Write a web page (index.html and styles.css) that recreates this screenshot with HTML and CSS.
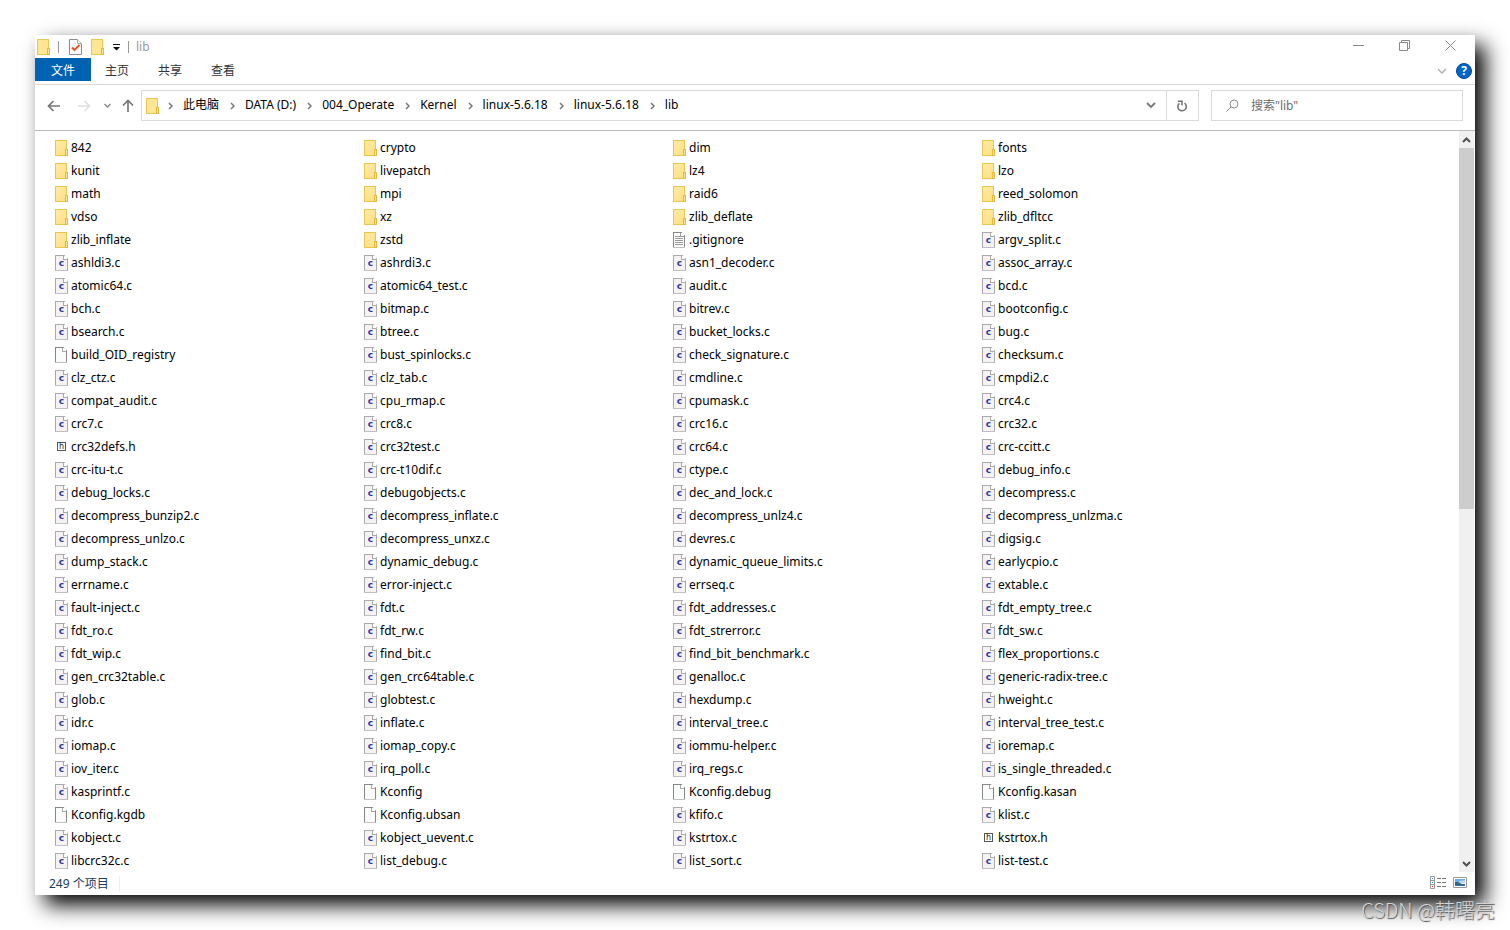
FILE: index.html
```html
<!DOCTYPE html>
<html lang="zh-CN">
<head>
<meta charset="utf-8">
<title>lib</title>
<link rel="stylesheet" href="styles.css">
</head>
<body>
<svg class="defs" width="0" height="0" aria-hidden="true">
  <symbol id="folder" viewBox="0 0 13 16">
    <path fill="#e8c650" d="M0 0h12v9h1v7H0z"/><path fill="#ffe694" d="M1 1h10v14H1z"/>
    <path fill="#e3b93f" d="M10 9h3v7h-3z"/><path fill="#ffe694" d="M11 10h1v5h-1z"/>
  </symbol>
  <symbol id="crumb" viewBox="0 0 5 8"><path d="M1 1l3 3-3 3" fill="none" stroke="#777" stroke-width="1.5"/></symbol>
</svg>
<main class="window">
  <header class="titlebar">
    <svg width="13" height="16"><use href="#folder"/></svg>
    <span class="bar"></span>
    <button class="quick" aria-label="属性"><svg width="13" height="16" viewBox="0 0 13 16"><path d="M.5.5h8l4 4v11H.5z" fill="#fafafa" stroke="#8b8b8b"/><path d="M8.500.5v4h4" fill="#fff" stroke="#aaa"/><path d="M3 8.500l2.500 2.500L10.500 6" fill="none" stroke="#e8501e" stroke-width="1.800"/></svg></button>
    <button class="quick" aria-label="新建文件夹"><svg width="13" height="16"><use href="#folder"/></svg></button>
    <button class="quick" aria-label="自定义快速访问工具栏"><svg width="7" height="9" viewBox="0 0 7 9"><path d="M0 2h7v1H0zM0 5h7L3.500 8.500z" fill="#111"/></svg></button>
    <span class="bar near"></span>
    <span class="title">lib</span>
    <div class="controls">
      <button aria-label="最小化"><svg width="11" height="11" viewBox="0 0 11 11"><path d="M0 5.500h11" stroke="#888"/></svg></button>
      <button aria-label="还原"><svg width="11" height="11" viewBox="0 0 11 11"><path d="M.5 2.500h8v8h-8zM2.500 2.500v-2h8v8h-2" fill="none" stroke="#888"/></svg></button>
      <button aria-label="关闭"><svg width="11" height="11" viewBox="0 0 11 11"><path d="M.5.5l10 10M10.500.5l-10 10" stroke="#888"/></svg></button>
    </div>
  </header>
  <nav class="ribbon">
    <button class="tab file">文件</button>
    <button class="tab">主页</button>
    <button class="tab">共享</button>
    <button class="tab">查看</button>
    <div class="ribbon-end">
      <button aria-label="展开功能区"><svg width="10" height="6" viewBox="0 0 10 6"><path d="M1 1l4 4 4-4" fill="none" stroke="#aaa" stroke-width="1.300"/></svg></button>
      <button class="help" aria-label="帮助">?</button>
    </div>
  </nav>
  <div class="address-row">
    <div class="history">
      <button aria-label="后退"><svg width="13" height="12" viewBox="0 0 13 12"><path d="M13 6H1.500M6.500 1l-5 5 5 5" fill="none" stroke="#777" stroke-width="1.700"/></svg></button>
      <button aria-label="前进"><svg width="13" height="12" viewBox="0 0 13 12"><path d="M0 6h11.500M6.500 1l5 5-5 5" fill="none" stroke="#ddd" stroke-width="1.500"/></svg></button>
      <button aria-label="最近位置"><svg width="7" height="5" viewBox="0 0 7 5"><path d="M.5 1l3 3 3-3" fill="none" stroke="#888" stroke-width="1.500"/></svg></button>
      <button aria-label="向上"><svg width="12" height="13" viewBox="0 0 12 13"><path d="M6 13V1.500M1 6.500l5-5 5 5" fill="none" stroke="#777" stroke-width="1.700"/></svg></button>
    </div>
    <div class="address">
      <svg width="13" height="16"><use href="#folder"/></svg>
      <svg width="5" height="8"><use href="#crumb"/></svg><a href="#">此电脑</a>
      <svg width="5" height="8"><use href="#crumb"/></svg><a href="#">DATA (D:)</a>
      <svg width="5" height="8"><use href="#crumb"/></svg><a href="#">004_Operate</a>
      <svg width="5" height="8"><use href="#crumb"/></svg><a href="#">Kernel</a>
      <svg width="5" height="8"><use href="#crumb"/></svg><a href="#">linux-5.6.18</a>
      <svg width="5" height="8"><use href="#crumb"/></svg><a href="#">linux-5.6.18</a>
      <svg width="5" height="8"><use href="#crumb"/></svg><a href="#">lib</a>
      <button class="drop" aria-label="以前的位置"><svg width="10" height="7" viewBox="0 0 10 7"><path d="M1 1l4 4 4-4" fill="none" stroke="#777" stroke-width="1.800"/></svg></button>
      <button class="refresh" aria-label="刷新"><svg width="11" height="12" viewBox="0 0 11 12"><path d="M7.500 3.200A4.200 4.200 0 1 1 2.500 3.300" fill="none" stroke="#707070" stroke-width="1.500"/><path d="M1 1.200h4v4" fill="none" stroke="#707070" stroke-width="1.500"/></svg></button>
    </div>
    <label class="search">
      <svg width="13" height="13" viewBox="0 0 13 13"><circle cx="8" cy="5" r="4" fill="none" stroke="#888"/><path d="M5 8L.5 12.500" stroke="#888"/></svg>
      <input type="search" aria-label="搜索" placeholder='搜索"lib"'>
    </label>
  </div>
  <div class="content">
    <ul class="files">
      <li class="d">842</li><li class="d">crypto</li><li class="d">dim</li><li class="d">fonts</li>
      <li class="d">kunit</li><li class="d">livepatch</li><li class="d">lz4</li><li class="d">lzo</li>
      <li class="d">math</li><li class="d">mpi</li><li class="d">raid6</li><li class="d">reed_solomon</li>
      <li class="d">vdso</li><li class="d">xz</li><li class="d">zlib_deflate</li><li class="d">zlib_dfltcc</li>
      <li class="d">zlib_inflate</li><li class="d">zstd</li><li class="t">.gitignore</li><li class="c">argv_split.c</li>
      <li class="c">ashldi3.c</li><li class="c">ashrdi3.c</li><li class="c">asn1_decoder.c</li><li class="c">assoc_array.c</li>
      <li class="c">atomic64.c</li><li class="c">atomic64_test.c</li><li class="c">audit.c</li><li class="c">bcd.c</li>
      <li class="c">bch.c</li><li class="c">bitmap.c</li><li class="c">bitrev.c</li><li class="c">bootconfig.c</li>
      <li class="c">bsearch.c</li><li class="c">btree.c</li><li class="c">bucket_locks.c</li><li class="c">bug.c</li>
      <li class="p">build_OID_registry</li><li class="c">bust_spinlocks.c</li><li class="c">check_signature.c</li><li class="c">checksum.c</li>
      <li class="c">clz_ctz.c</li><li class="c">clz_tab.c</li><li class="c">cmdline.c</li><li class="c">cmpdi2.c</li>
      <li class="c">compat_audit.c</li><li class="c">cpu_rmap.c</li><li class="c">cpumask.c</li><li class="c">crc4.c</li>
      <li class="c">crc7.c</li><li class="c">crc8.c</li><li class="c">crc16.c</li><li class="c">crc32.c</li>
      <li class="h">crc32defs.h</li><li class="c">crc32test.c</li><li class="c">crc64.c</li><li class="c">crc-ccitt.c</li>
      <li class="c">crc-itu-t.c</li><li class="c">crc-t10dif.c</li><li class="c">ctype.c</li><li class="c">debug_info.c</li>
      <li class="c">debug_locks.c</li><li class="c">debugobjects.c</li><li class="c">dec_and_lock.c</li><li class="c">decompress.c</li>
      <li class="c">decompress_bunzip2.c</li><li class="c">decompress_inflate.c</li><li class="c">decompress_unlz4.c</li><li class="c">decompress_unlzma.c</li>
      <li class="c">decompress_unlzo.c</li><li class="c">decompress_unxz.c</li><li class="c">devres.c</li><li class="c">digsig.c</li>
      <li class="c">dump_stack.c</li><li class="c">dynamic_debug.c</li><li class="c">dynamic_queue_limits.c</li><li class="c">earlycpio.c</li>
      <li class="c">errname.c</li><li class="c">error-inject.c</li><li class="c">errseq.c</li><li class="c">extable.c</li>
      <li class="c">fault-inject.c</li><li class="c">fdt.c</li><li class="c">fdt_addresses.c</li><li class="c">fdt_empty_tree.c</li>
      <li class="c">fdt_ro.c</li><li class="c">fdt_rw.c</li><li class="c">fdt_strerror.c</li><li class="c">fdt_sw.c</li>
      <li class="c">fdt_wip.c</li><li class="c">find_bit.c</li><li class="c">find_bit_benchmark.c</li><li class="c">flex_proportions.c</li>
      <li class="c">gen_crc32table.c</li><li class="c">gen_crc64table.c</li><li class="c">genalloc.c</li><li class="c">generic-radix-tree.c</li>
      <li class="c">glob.c</li><li class="c">globtest.c</li><li class="c">hexdump.c</li><li class="c">hweight.c</li>
      <li class="c">idr.c</li><li class="c">inflate.c</li><li class="c">interval_tree.c</li><li class="c">interval_tree_test.c</li>
      <li class="c">iomap.c</li><li class="c">iomap_copy.c</li><li class="c">iommu-helper.c</li><li class="c">ioremap.c</li>
      <li class="c">iov_iter.c</li><li class="c">irq_poll.c</li><li class="c">irq_regs.c</li><li class="c">is_single_threaded.c</li>
      <li class="c">kasprintf.c</li><li class="p">Kconfig</li><li class="p">Kconfig.debug</li><li class="p">Kconfig.kasan</li>
      <li class="p">Kconfig.kgdb</li><li class="p">Kconfig.ubsan</li><li class="c">kfifo.c</li><li class="c">klist.c</li>
      <li class="c">kobject.c</li><li class="c">kobject_uevent.c</li><li class="c">kstrtox.c</li><li class="h">kstrtox.h</li>
      <li class="c">libcrc32c.c</li><li class="c">list_debug.c</li><li class="c">list_sort.c</li><li class="c">list-test.c</li>
    </ul>
    <div class="scrollbar">
      <button aria-label="向上滚动"><svg width="9" height="6" viewBox="0 0 9 6"><path d="M1 5l3.500-3.500L8 5" fill="none" stroke="#505050" stroke-width="2"/></svg></button>
      <div class="track"><div class="thumb"></div></div>
      <button aria-label="向下滚动"><svg width="9" height="6" viewBox="0 0 9 6"><path d="M1 1l3.500 3.500L8 1" fill="none" stroke="#505050" stroke-width="2"/></svg></button>
    </div>
  </div>
  <footer class="status">
    <span class="count">249 个项目</span>
    <div class="views">
      <button aria-label="详细信息"><svg width="17" height="13" viewBox="0 0 17 13"><path d="M.5.5h4v12h-4zM.5 4.500h4M.5 8.500h4" fill="#fff" stroke="#999"/><path d="M7 2.500h4m1 0h4M7 6.500h4m1 0h4M7 10.500h4m1 0h4" stroke="#777"/><path d="M2 2h1v1H2zM2 6h1v1H2z" fill="#3b8ee0"/><path d="M2 10h1v1H2z" fill="#d22"/></svg></button>
      <button aria-label="大图标"><svg width="14" height="11" viewBox="0 0 14 11"><path d="M.5.5h13v10H.5z" fill="#fff" stroke="#999"/><path d="M2 2h10v4H2z" fill="#6aa9ea"/><path d="M6 4l6-1v3H6z" fill="#b6d6f2"/><path d="M2 5l3 0 4 2h3v2H2z" fill="#2f6b7c"/><path d="M2 8h10v1H2z" fill="#3b6fb4"/></svg></button>
    </div>
  </footer>
</main>
<div class="watermark">CSDN @韩曙亮</div>
</body>
</html>
```
FILE: styles.css
```css
*, *::before { box-sizing: border-box; }
body {
  margin: 0;
  min-height: 100vh;
  padding: 35px;
  display: flex;
  position: relative;
  overflow: hidden;
  background: #fff;
  color: #000;
  font: 12px/16px "Noto Sans", "Noto Sans CJK SC", sans-serif;
}
.defs { position: absolute; }
svg { display: block; flex: none; }
button {
  border: 0;
  padding: 0;
  background: none;
  font: inherit;
  color: inherit;
  display: flex;
  align-items: center;
  justify-content: center;
}
.window {
  flex: 1;
  min-width: 0;
  display: flex;
  flex-direction: column;
  background: #fff;
  box-shadow: 10px 10px 20px #000;
}
.titlebar { display: flex; align-items: center; height: 23px; padding-left: 2px; }
.bar { width: 1px; height: 12px; margin: 0 10px 0 8px; background: #999; }
.quick { margin-right: 9px; }
.bar.near { margin: 0 7px 0 -1px; }
.title { color: #999; }
.controls { display: flex; margin: 0 2px 0 auto; align-self: stretch; }
.controls button { width: 46px; padding-bottom: 2px; }
.ribbon { display: flex; gap: 1px; height: 27px; padding-bottom: 3px; border-bottom: 1px solid #dadada; }
.tab { padding: 2px 14px 0; color: #333; }
.tab.file { margin-right: -1px; padding: 2px 16px 0; background: #0063b1; color: #fff; }
.ribbon-end { display: flex; align-items: center; gap: 9px; margin-left: auto; padding: 2px 3px 0 0; }
.help { width: 16px; height: 16px; border: 1px solid #00488f; border-radius: 50%; background: #0066cc; color: #fff; font-weight: bold; }
.address-row { display: flex; align-items: center; height: 46px; padding: 0 12px 4px 12px; border-bottom: 1px solid #bbb; }
.history { display: flex; align-items: center; width: 94px; gap: 13px; }
.history button:first-child { margin-right: 5px; }
.history button:last-child { margin-left: -2px; }
.address { flex: 1; display: flex; align-items: center; height: 31px; padding-left: 4px; border: 1px solid #d9d9d9; }
.address a { color: #000; text-decoration: none; padding: 0 11px 2px 10px; }
.address > svg:first-child { margin-right: 9px; }
.drop { width: 30px; height: 29px; margin-left: auto; }
.refresh { width: 32px; height: 29px; border-left: 1px solid #d9d9d9; }
.search { display: flex; align-items: center; gap: 12px; width: 252px; height: 31px; margin-left: 12px; padding-left: 14px; border: 1px solid #d9d9d9; }
.search input { flex: 1; min-width: 0; border: 0; padding: 0; outline: 0; background: none; font: inherit; }
.search input::placeholder { color: #6d6d6d; opacity: 1; }
.content { flex: 1; display: flex; }
.files {
  flex: 1;
  display: grid;
  grid-template-columns: repeat(auto-fill, 309px);
  grid-auto-rows: 23px;
  margin: 0;
  padding: 5px 0 0 20px;
  list-style: none;
}
.files li { display: flex; align-items: center; }
.files li::before {
  content: "";
  flex: none;
  width: 13px;
  height: 16px;
  margin-right: 3px;
  background-repeat: no-repeat;
}
.files .d::before {
  background-image:
    linear-gradient(#ffe694, #ffe694),
    linear-gradient(#e3b93f, #e3b93f),
    linear-gradient(135deg, #ffeba6, #fddf84),
    linear-gradient(#e8c650, #e8c650);
  background-position: 11px 10px, 10px 9px, 1px 1px, 0 0;
  background-size: 1px 5px, 3px 7px, 10px 14px, 12px 16px;
}
.files .c::before, .files .p::before, .files .t::before {
  border: 1px solid #aaa;
  border-bottom-color: #888;
  background-color: #f6f2f4;
  background-image:
    linear-gradient(#aaa, #aaa),
    linear-gradient(#aaa, #aaa),
    linear-gradient(#fff, #fff);
  background-position: right 3px top 0, right 0 top 3px, right top;
  background-size: 1px 4px, 4px 1px, 3px 3px;
  clip-path: polygon(0 0, 9px 0, 13px 4px, 13px 16px, 0 16px);
}
.files .c::before {
  content: "c";
  color: #2b35a8;
  font: bold 9px/14px "DejaVu Sans", sans-serif;
  text-align: center;
}
.files .p::before, .files .t::before {
  width: 12px;
  margin-right: 4px;
  border-color: #888;
  background-color: #fafbfb;
  clip-path: polygon(0 0, 8px 0, 12px 4px, 12px 16px, 0 16px);
}
.files .t::before {
  background-image:
    linear-gradient(#999, #999),
    linear-gradient(#999, #999),
    linear-gradient(#fff, #fff),
    repeating-linear-gradient(#999 0 1px, #fff 1px 2px);
  background-position: right 3px top 0, right 0 top 3px, right top, 1px 3px;
  background-size: 1px 4px, 4px 1px, 3px 3px, 8px 9px;
}
.files .h::before {
  content: "h";
  width: 9px;
  height: 9px;
  margin: 0 5px 0 2px;
  border: 1px solid #555;
  color: #222;
  font: 8px/7px "DejaVu Sans", sans-serif;
  text-align: center;
}
.scrollbar { display: flex; flex-direction: column; width: 15px; margin-right: 1px; background: #f0f0f0; }
.scrollbar button { height: 17px; }
.track { flex: 1; }
.thumb { height: 51%; background: #cdcdcd; }
.status { display: flex; align-items: center; height: 23px; padding: 0 8px 0 14px; color: #1e395b; }
.count { padding-right: 10px; border-right: 1px solid #eee; }
.views { display: flex; align-items: center; gap: 6px; margin-left: auto; padding-bottom: 2px; }
.watermark {
  position: absolute;
  right: 15px;
  bottom: 6px;
  color: #d4d4d4;
  font: 300 20px/28px "Noto Sans CJK SC", sans-serif;
  text-shadow: 1px 1px 1px #555;
}
```
